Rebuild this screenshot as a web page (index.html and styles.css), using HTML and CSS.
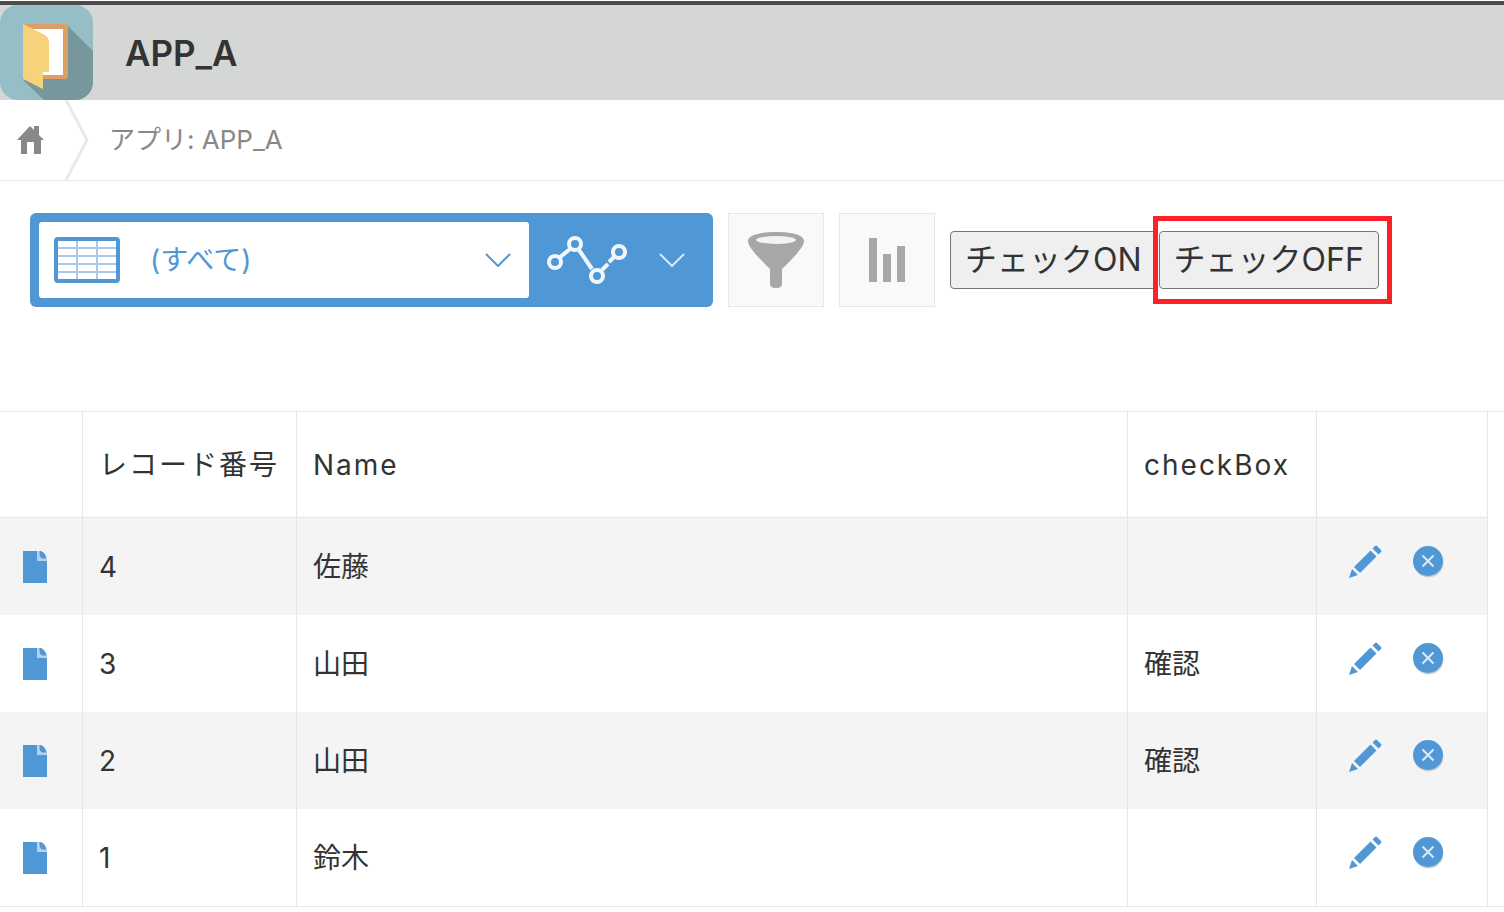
FILE: index.html
```html
<!DOCTYPE html>
<html lang="ja">
<head>
  <meta charset="UTF-8">
  <meta name="viewport" content="width=device-width, initial-scale=1.0">
  <title>APP_A - レコードの一覧</title>
  <link rel="stylesheet" href="styles.css">
</head>
<body>
  <!-- Shared row icons -->
  <svg class="sprite" aria-hidden="true">
    <symbol id="icon-file" viewBox="0 0 24 32">
      <path d="M0 0H14V10H24V32H0Z" fill="#5097d5"/>
      <path d="M14 0H17L24 7V10H14Z" fill="#b5d2ed"/>
      <path d="M16.500 0H18C21 1.500 23 4 23.500 7.500H20C18 7.500 16.500 5.500 16.500 3Z" fill="#5097d5"/>
    </symbol>
    <symbol id="icon-edit" viewBox="0 0 34 34">
      <g fill="#5097d5">
        <path d="M24.500 3.500L27 1Q28 0 29 1L33 5Q34 6 33 7L30.500 9.500Z"/>
        <path d="M22.500 5.500L28.500 11.500L12 28L6 22Z"/>
        <path d="M4 24L10 30L1 33Z"/>
      </g>
    </symbol>
    <symbol id="icon-delete" viewBox="0 0 32 34">
      <circle cx="16.500" cy="17.500" r="15" fill="#c9cdd1"/>
      <circle cx="16" cy="16" r="15" fill="#5097d5"/>
      <path d="M10.500 10.500L21.500 21.500M21.500 10.500L10.500 21.500" stroke="#dce9f5" stroke-width="2"/>
    </symbol>
  </svg>

  <header class="app-header">
    <svg class="app-icon" viewBox="0 0 93 95" aria-hidden="true">
      <defs>
        <clipPath id="app-icon-shape"><rect width="93" height="95" rx="18"/></clipPath>
      </defs>
      <g clip-path="url(#app-icon-shape)">
        <rect width="93" height="95" fill="#95bec6"/>
        <path d="M67 20L93 46V95H44L23 75Z" fill="#78979d"/>
        <rect x="23" y="19" width="45" height="55" rx="3" fill="#dd9f63"/>
        <rect x="29" y="24" width="34" height="46" fill="#fff"/>
        <path d="M23 19L43 29Q49 32 49 37V67H43V84L23 74Z" fill="#f6d27b"/>
      </g>
    </svg>
    <h1>APP_A</h1>
  </header>

  <nav class="breadcrumb">
    <a href="#" class="home" aria-label="ホーム">
      <svg width="28" height="28" viewBox="0 0 28 28" aria-hidden="true">
        <path d="M0 14L13 0L17 4V0H22V9L27 14H24V28H17V16H10V28H4V14Z" fill="#888"/>
      </svg>
    </a>
    <svg class="separator" viewBox="0 0 24 80" aria-hidden="true">
      <path d="M1 0L22 40L1 80" fill="none" stroke="#e6eae9" stroke-width="3"/>
    </svg>
    <a href="#">アプリ: APP_A</a>
  </nav>

  <div class="toolbar">
    <!-- View and graph selectors -->
    <div class="view-selector">
      <div class="view-box">
        <svg width="66" height="46" viewBox="0 0 66 46" aria-hidden="true">
          <rect x="2" y="2" width="62" height="42" rx="2" fill="#fff" stroke="#5097d5" stroke-width="4"/>
          <path d="M4 11H62M4 19H62M4 27H62M4 35H62M23 4V42M43 4V42" stroke="#a7caea" stroke-width="2"/>
        </svg>
        <select aria-label="一覧の選択">
          <option>(すべて)</option>
        </select>
        <svg width="26" height="14" viewBox="0 0 26 14" aria-hidden="true">
          <path d="M1 1L13 13L25 1" fill="none" stroke="#5097d5" stroke-width="2"/>
        </svg>
      </div>
      <button class="graph-button" aria-label="グラフの選択">
        <svg width="80" height="48" viewBox="0 0 80 48" fill="none" stroke="#f1f6fc" aria-hidden="true">
          <path d="M12 22L23 13M32 14L45 33M55 34L61 28M62 26L67 21" stroke-width="4"/>
          <g stroke-width="4">
            <circle cx="8" cy="26" r="6"/>
            <circle cx="28" cy="8" r="6"/>
            <circle cx="50" cy="40" r="6"/>
            <circle cx="72" cy="16" r="6"/>
          </g>
        </svg>
        <svg width="26" height="14" viewBox="0 0 26 14" aria-hidden="true">
          <path d="M1 1L13 13L25 1" fill="none" stroke="#dce9f7" stroke-width="2"/>
        </svg>
      </button>
    </div>

    <button class="icon-button" aria-label="絞り込む">
      <svg width="56" height="56" viewBox="0 0 56 56" aria-hidden="true">
        <path d="M0 9C0 3 12 0 28 0S56 3 56 9C56 16 42 29 34 37V52Q34 56 28 56T22 52V37C14 29 0 16 0 9Z" fill="#a7a7a7"/>
        <ellipse cx="28" cy="8" rx="20" ry="4" fill="#f2f3f4"/>
      </svg>
    </button>
    <button class="icon-button" aria-label="グラフを作成">
      <svg width="36" height="44" viewBox="0 0 36 44" fill="#a7a7a7" aria-hidden="true">
        <rect x="0" y="0" width="8" height="44"/>
        <rect x="14" y="16" width="8" height="28"/>
        <rect x="28" y="8" width="8" height="36"/>
      </svg>
    </button>

    <div class="check-buttons">
      <button>チェックON</button>
      <div class="highlight">
        <button>チェックOFF</button>
      </div>
    </div>
  </div>

  <main class="records">
    <table>
      <colgroup>
        <col class="col-open">
        <col class="col-number">
        <col>
        <col class="col-check">
        <col class="col-actions">
      </colgroup>
      <thead>
        <tr>
          <th></th>
          <th>レコード番号</th>
          <th>Name</th>
          <th>checkBox</th>
          <th></th>
        </tr>
      </thead>
      <tbody>
        <tr>
          <td><a href="#" aria-label="詳細"><svg class="file"><use href="#icon-file"/></svg></a></td>
          <td>4</td>
          <td>佐藤</td>
          <td></td>
          <td>
            <div class="actions">
              <button aria-label="編集"><svg class="edit"><use href="#icon-edit"/></svg></button>
              <button aria-label="削除"><svg class="delete"><use href="#icon-delete"/></svg></button>
            </div>
          </td>
        </tr>
        <tr>
          <td><a href="#" aria-label="詳細"><svg class="file"><use href="#icon-file"/></svg></a></td>
          <td>3</td>
          <td>山田</td>
          <td>確認</td>
          <td>
            <div class="actions">
              <button aria-label="編集"><svg class="edit"><use href="#icon-edit"/></svg></button>
              <button aria-label="削除"><svg class="delete"><use href="#icon-delete"/></svg></button>
            </div>
          </td>
        </tr>
        <tr>
          <td><a href="#" aria-label="詳細"><svg class="file"><use href="#icon-file"/></svg></a></td>
          <td>2</td>
          <td>山田</td>
          <td>確認</td>
          <td>
            <div class="actions">
              <button aria-label="編集"><svg class="edit"><use href="#icon-edit"/></svg></button>
              <button aria-label="削除"><svg class="delete"><use href="#icon-delete"/></svg></button>
            </div>
          </td>
        </tr>
        <tr>
          <td><a href="#" aria-label="詳細"><svg class="file"><use href="#icon-file"/></svg></a></td>
          <td>1</td>
          <td>鈴木</td>
          <td></td>
          <td>
            <div class="actions">
              <button aria-label="編集"><svg class="edit"><use href="#icon-edit"/></svg></button>
              <button aria-label="削除"><svg class="delete"><use href="#icon-delete"/></svg></button>
            </div>
          </td>
        </tr>
      </tbody>
    </table>
  </main>
</body>
</html>
```
FILE: styles.css
```css
/* General Styling */
* {
  box-sizing: border-box;
}

body {
  margin: 0;
  padding-top: 1px;
  background: #fff;
  color: #333;
  font-family: Inter, 'Noto Sans CJK JP', sans-serif;
  font-size: 28px;
  line-height: 40px;
}

button,
select {
  font-family: inherit;
  color: inherit;
  cursor: pointer;
}

svg {
  display: block;
  flex-shrink: 0;
}

.sprite {
  position: absolute;
  width: 0;
  height: 0;
}

/* Header */
.app-header {
  display: flex;
  align-items: center;
  gap: 32px;
  border-top: 4px solid #4b4d4c;
  background: #d5d7d6;
}

.app-icon {
  width: 93px;
  height: 95px;
}

h1 {
  margin: 0;
  font-size: 35px;
  font-weight: 600;
}

/* Breadcrumb */
.breadcrumb {
  display: flex;
  align-items: center;
  border-bottom: 1px solid #e3e7e8;
  color: #888;
  font-size: 26px;
}

.breadcrumb a {
  color: inherit;
  text-decoration: none;
}

.breadcrumb .home {
  padding: 0 20px 0 17px;
}

.separator {
  width: 24px;
  height: 80px;
  margin-right: 20px;
}

/* Toolbar */
.toolbar {
  display: flex;
  align-items: center;
  gap: 15px;
  padding: 32px 30px 104px;
}

.view-selector {
  display: flex;
  width: 683px;
  height: 94px;
  padding: 9px;
  background: #5097d5;
  border-radius: 6px;
}

.view-box {
  flex: 1;
  display: flex;
  align-items: center;
  padding: 0 18px 0 15px;
  background: #fff;
  border-radius: 3px;
}

.view-box select {
  flex: 1;
  height: 100%;
  padding: 0 0 0 30px;
  border: none;
  background: none;
  appearance: none;
  color: #5097d5;
  font-size: 28px;
}

.graph-button {
  display: flex;
  align-items: center;
  gap: 32px;
  padding: 0 19px 0 18px;
  border: none;
  background: none;
}

.icon-button {
  display: flex;
  align-items: center;
  justify-content: center;
  width: 96px;
  height: 94px;
  padding: 0;
  border: 1px solid #e3e7e8;
  background: #f7f9fa;
}

.check-buttons {
  display: flex;
  gap: 2px;
}

.check-buttons button {
  padding: 8px 14px;
  border: 1px solid #767676;
  border-radius: 4px;
  background: #efefef;
  font-size: 32px;
  line-height: 40px;
  white-space: nowrap;
}

.highlight {
  position: relative;
}

.highlight::after {
  content: '';
  position: absolute;
  inset: -15px -13px -15px -6px;
  border: 5px solid #ff1f29;
  pointer-events: none;
}

/* Record list */
.records {
  border-top: 1px solid #e3e7e8;
  border-bottom: 1px solid #e3e7e8;
  padding-right: 16px;
}

table {
  width: 100%;
  table-layout: fixed;
  border-collapse: separate;
  border-spacing: 0;
}

.col-open {
  width: 83px;
}

.col-number {
  width: 214px;
}

.col-check {
  width: 189px;
}

.col-actions {
  width: 171px;
}

th,
td {
  padding: 0 16px;
  border-right: 1px solid #e3e7e8;
  text-align: left;
  font-weight: 400;
  white-space: nowrap;
}

th {
  height: 106px;
  border-bottom: 1px solid #e3e7e8;
  letter-spacing: 2px;
}

td {
  height: 97px;
}

tbody tr:nth-child(odd) {
  background: #f4f4f4;
}

.file {
  width: 24px;
  height: 32px;
  margin-left: 7px;
}

.actions {
  display: flex;
  gap: 30px;
  padding: 0 0 10px 15px;
}

.actions button {
  padding: 0;
  border: none;
  background: none;
}

.edit {
  width: 34px;
  height: 34px;
}

.delete {
  width: 32px;
  height: 34px;
}
```
